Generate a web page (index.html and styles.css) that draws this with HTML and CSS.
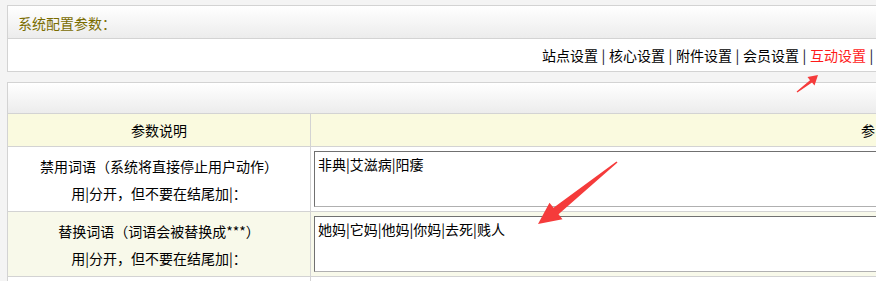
FILE: index.html
```html
<!DOCTYPE html>
<html lang="zh">
<head>
<meta charset="utf-8">
<title>系统配置参数</title>
<link rel="stylesheet" href="styles.css">
</head>
<body>
<div class="page">
  <div class="panel">
    <div class="panel-head title">系统配置参数：</div>
    <div class="nav">
      <a href="#">站点设置</a><span class="sep">|</span><a href="#">核心设置</a><span class="sep">|</span><a href="#">附件设置</a><span class="sep">|</span><a href="#">会员设置</a><span class="sep">|</span><a href="#" class="active">互动设置</a><span class="sep">|</span>
    </div>
  </div>

  <div class="panel panel-table">
    <div class="panel-head"></div>
    <table class="params">
      <tr class="thead">
        <td class="col-desc">参数说明</td>
        <td class="col-val">参</td>
      </tr>
      <tr>
        <td class="col-desc">禁用词语（系统将直接停止用户动作）<br>用|分开，但不要在结尾加|：</td>
        <td class="col-val"><textarea class="words">非典|艾滋病|阳痿</textarea></td>
      </tr>
      <tr class="alt">
        <td class="col-desc">替换词语（词语会被替换成***）<br>用|分开，但不要在结尾加|：</td>
        <td class="col-val"><textarea class="words">她妈|它妈|他妈|你妈|去死|贱人</textarea></td>
      </tr>
      <tr>
        <td class="col-desc">&nbsp;</td>
        <td class="col-val">&nbsp;</td>
      </tr>
    </table>
  </div>
</div>

<svg class="marks" width="876" height="281" viewBox="0 0 876 281">
  <polygon fill="#f53b3b" points="617.5,162.6 558.5,214.2 562.5,219.3 538,224 549.5,202.7 553.5,207.8 616.5,161.4"/>
  <polygon fill="#f53b3b" points="797.4,92.5 812,82.6 814.5,85.5 818,75 807.5,77 810,80.2 796.6,91.5"/>
</svg>
</body>
</html>
```

FILE: styles.css
```css
html, body {
  margin: 0;
  padding: 0;
  background: #f4f4f4;
  overflow: hidden;
}
body {
  position: relative;
  width: 876px;
  height: 281px;
  font-family: "Noto Sans CJK SC", "Microsoft YaHei", sans-serif;
  font-size: 14px;
  color: #000;
}
.page {
  padding: 5px 0 0 7px;
  width: 1200px;
}
.panel {
  border: 1px solid #d3d3d3;
  background: #fff;
  width: 1100px;
}
.panel-table {
  margin-top: 10px;
}
.panel-head {
  height: 30px;
  background: linear-gradient(#ffffff, #ececec);
  border-bottom: 1px solid #d3d3d3;
}
.title {
  height: 30px;
  padding: 2px 0 0 10px;
  line-height: 30px;
  color: #7a6c00;
  font-size: 14px;
}
.nav {
  height: 32px;
  line-height: 32px;
  padding-left: 534px;
  white-space: nowrap;
  color: #222;
}
.nav a {
  color: #000;
  text-decoration: none;
}
.nav a.active {
  color: #ff1a1a;
}
.nav .sep {
  display: inline-block;
  width: 11px;
  text-align: center;
  color: #111;
}
.params {
  border-collapse: collapse;
  width: 100%;
}
.params td {
  border-top: 1px solid #d3d3d3;
  padding: 0;
}
.params tr:first-child td {
  border-top: none;
}
.params .col-desc {
  width: 302px;
  border-right: 1px solid #d3d3d3;
  text-align: center;
}
.thead td {
  height: 30px;
  line-height: 32px;
  background: #fafadf;
}
.thead .col-val {
  text-align: left;
  padding-left: 550px;
}
.params tr:not(.thead) .col-desc {
  height: 64px;
  line-height: 27px;
  padding-top: 2px;
  box-sizing: border-box;
}
.params tr.alt td {
  background: #f8f9ea;
}
.params tr:not(.thead) .col-val {
  padding: 4px 3px 0;
  vertical-align: top;
}
.words {
  display: block;
  box-sizing: border-box;
  width: 600px;
  height: 56px;
  margin: 0 0 4px 0;
  padding: 2px 3px;
  border: 1px solid #b0b0b0;
  border-top-color: #707070;
  border-left-color: #707070;
  font-family: "Noto Sans CJK SC", "Microsoft YaHei", sans-serif;
  font-size: 14px;
  line-height: 20px;
  color: #000;
  background: #fff;
  resize: none;
  outline: none;
}
.marks {
  position: absolute;
  left: 0;
  top: 0;
  pointer-events: none;
}
```
